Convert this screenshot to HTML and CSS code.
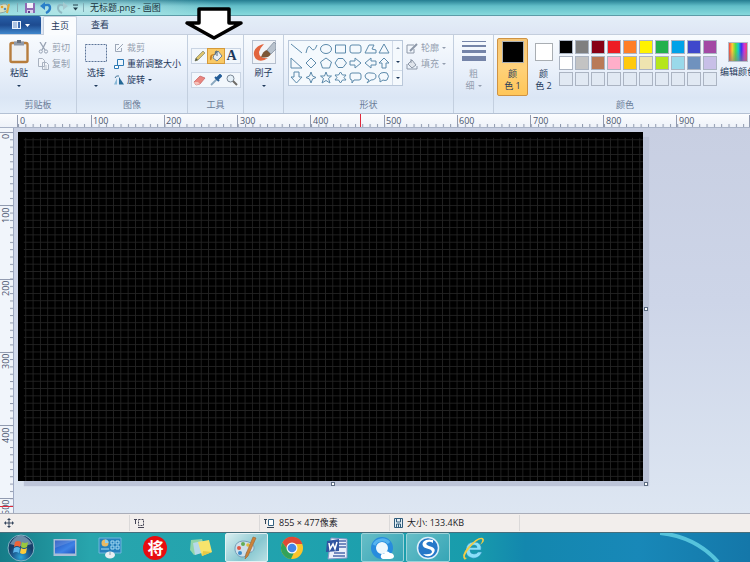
FILE: index.html
```html
<!DOCTYPE html>
<html lang="zh-CN">
<head>
<meta charset="utf-8">
<title>无标题.png - 画图</title>
<link rel="stylesheet" href="styles.css">
</head>
<body>
<header class="titlebar">
  <svg class="app-icon" width="11" height="14" viewBox="0 0 11 14"><path d="M0 4Q7 1 8 6T0 12" fill="#d9dfc2" stroke="#8fa6a0"/><circle cx="2" cy="6" r="1.3" fill="#e0a32c"/><circle cx="5" cy="8" r="1.3" fill="#4a91c4"/><path d="M7 12L9 3" stroke="#e2a93a" stroke-width="2"/></svg>
  <span class="divider"></span>
  <button class="quick" aria-label="保存"><svg width="12" height="12" viewBox="0 0 12 12"><path d="M1 1h10v10H1z" fill="#8d6bb3"/><path d="M3 1h6v5H3z" fill="#f4f2fa"/><path d="M3 8h6v3H3z" fill="#d8d0ea"/><path d="M4 9h2v2H4z" fill="#5d3f8b"/></svg></button>
  <button class="quick" aria-label="撤销"><svg width="12" height="12" viewBox="0 0 12 12"><path d="M3 4Q10 1 10 6Q10 9 6 11" fill="none" stroke="#2a7fc9" stroke-width="2.4"/><path d="M0 4L5 0V8z" fill="#2a7fc9"/></svg></button>
  <button class="quick" aria-label="重做"><svg width="12" height="12" viewBox="0 0 12 12"><path d="M9 4Q2 1 2 6Q2 9 6 11" fill="none" stroke="#8fb9c2" stroke-width="2"/><path d="M12 4L7 0V8z" fill="#a5c9cf"/></svg></button>
  <button class="quick" aria-label="自定义"><svg width="7" height="8" viewBox="0 0 7 8"><path d="M1 1h5" stroke="#223f4a"/><path d="M1 3.5h5L3.5 6.5z" fill="#223f4a"/></svg></button>
  <span class="divider"></span>
  <h1>无标题.png - 画图</h1>
</header>

<nav class="tabs">
  <button class="file" aria-label="文件"><svg width="20" height="10" viewBox="0 0 20 10"><path d="M1 1h9v8H1z" fill="#e9f1fb"/><path d="M2 3h4M2 5h4M2 7h4" stroke="#7195c8"/><path d="M7 2h2v6H7z" fill="#3c6bb0"/><path d="M14 4h5l-2.500 3z" fill="#fff"/></svg></button>
  <button class="tab active">主页</button>
  <button class="tab">查看</button>
  <svg class="pointer" width="62" height="36" viewBox="0 0 62 36"><path d="M16 3H46V17H58L31 32L4 17H16z" fill="#fff" stroke="#000" stroke-width="3.500" stroke-linejoin="round"/></svg>
</nav>

<main class="ribbon">
  <section class="group clipboard">
    <div class="tools">
      <button class="big"><svg width="20" height="24" viewBox="0 0 20 24"><rect x="1.500" y="3" width="17" height="19" rx="1.500" fill="#edf0f3" stroke="#b77d3c" stroke-width="2.400"/><path d="M5 1.500h10v4H5z" fill="#8e99a8"/><path d="M8 0h4v3H8z" fill="#66717f"/></svg><span>粘贴</span><i class="caret"></i></button>
      <div class="stack">
        <button class="small off"><svg width="11" height="12" viewBox="0 0 11 12"><path d="M2 0L7 8M8 0L4 8" stroke="#98a3b4" stroke-width="1.300"/><circle cx="2.800" cy="9.500" r="1.600" fill="none" stroke="#98a3b4"/><circle cx="8" cy="9.500" r="1.600" fill="none" stroke="#98a3b4"/></svg>剪切</button>
        <button class="small off"><svg width="11" height="12" viewBox="0 0 11 12"><path d="M.5.5h4l2 2v6h-6zM4.500 4.500h4l2 2v5h-6z" fill="#f2f5fa" stroke="#a9b2c0"/><path d="M6 8h3M6 10h3" stroke="#b9c1cc"/></svg>复制</button>
      </div>
    </div>
    <h2>剪贴板</h2>
  </section>

  <section class="group image">
    <div class="tools">
      <button class="big"><svg width="24" height="24" viewBox="0 0 24 24"><rect x="1.500" y="4.500" width="21" height="17" fill="#e8effa" stroke="#5d7598" stroke-dasharray="2 1"/></svg><span>选择</span><i class="caret"></i></button>
      <div class="stack">
        <button class="small off"><svg width="10" height="10" viewBox="0 0 10 10"><path d="M1.500 2v6.500h6V5M1 1.500h4M3 7L9 1" fill="none" stroke="#9ca7b7"/></svg>裁剪</button>
        <button class="small"><svg width="10" height="10" viewBox="0 0 10 10"><path d="M3.500.5h6v6h-6z" fill="#eef6fd" stroke="#2d7ab5"/><path d="M.5 6.500h4v3h-4z" fill="#fff" stroke="#2d7ab5"/></svg>重新调整大小</button>
        <button class="small"><svg width="10" height="10" viewBox="0 0 10 10"><path d="M0 9.500L3 3v6.500z" fill="#88b8d7"/><path d="M5 2v7.500h5z" fill="#246896"/><path d="M1 3Q2 0 5 1" fill="none" stroke="#45779a"/></svg>旋转<i class="caret"></i></button>
      </div>
    </div>
    <h2>图像</h2>
  </section>

  <section class="group toolset">
    <div class="tool-rows">
      <div class="tool-row">
        <button aria-label="铅笔"><svg width="12" height="12" viewBox="0 0 12 12"><path d="M1 11L2 8L9 1L11 3L4 10z" fill="#ddc36b" stroke="#8f9273" stroke-width=".8"/><path d="M1 11L2 8L4 10z" fill="#4e5848"/></svg></button>
        <button class="selected" aria-label="用颜色填充"><svg width="14" height="13" viewBox="0 0 14 13"><path d="M5 5L9 1L13 6L8 11L4 8z" fill="#e9eef3" stroke="#6e8396"/><path d="M6 5Q6 0 8 1V6" fill="none" stroke="#53697c"/><path d="M1 10Q0 3 6 4L3 6Q3 11 1 10" fill="#c98021"/></svg></button>
        <button class="letter">A</button>
      </div>
      <div class="tool-row">
        <button aria-label="橡皮擦"><svg width="13" height="11" viewBox="0 0 13 11"><path d="M1 7L7 1L12 3L7 9L3 10z" fill="#e9867f" stroke="#c65f5e" stroke-width=".7"/><path d="M1 7L5 7L7 9L3 10z" fill="#f7c1b9"/></svg></button>
        <button aria-label="颜色选取器"><svg width="12" height="12" viewBox="0 0 12 12"><path d="M1 11L7 5" stroke="#8aa8bf" stroke-width="1.800"/><path d="M5 3L9 7M7 4L10 1L11 2L8 5" stroke="#245d97" stroke-width="2" fill="#245d97"/></svg></button>
        <button aria-label="放大镜"><svg width="12" height="12" viewBox="0 0 12 12"><circle cx="4.500" cy="4.500" r="3.500" fill="#e5f0f8" stroke="#7a8795"/><path d="M7 7L11 11" stroke="#6e6b66" stroke-width="2"/></svg></button>
      </div>
    </div>
    <h2>工具</h2>
  </section>

  <section class="group brushes">
    <div class="tools">
      <button class="big"><svg width="24" height="24" viewBox="0 0 24 24"><rect x=".5" y=".5" width="23" height="23" fill="#f1f4f8" stroke="#b5bfce"/><path d="M12 4C3 6 -1 13 4 19Q9 23 16 18Q7 19 7 12Q8 8 12 4" fill="#e2653e"/><path d="M9 17Q11 11 15 10L19 14Q16 19 9 17" fill="#7c5636"/><path d="M15 10L22 2L24 4V9L19 14z" fill="#b8c2cd" stroke="#6c7b8c" stroke-width=".6"/></svg><span>刷子</span><i class="caret"></i></button>
    </div>
  </section>

  <section class="group shapes">
    <div class="tools">
      <div class="gallery">
        <svg class="shape-list" width="103" height="44" viewBox="0 0 103 44" fill="#f4f9fd" stroke="#5c8aab">
          <path d="M2 3L13 12"/><path d="M17 12Q19 2 22 7T28 4" fill="none"/><ellipse cx="37" cy="8" rx="5.500" ry="4.500"/><path d="M46.500 4h10v8h-10z"/><rect x="61" y="4" width="11" height="8" rx="2"/><path d="M76 12L80 4H85L83 8L87 9V12z"/><path d="M95 3L100 12H90z"/>
          <path d="M2 17V27H13z"/><path d="M22 17L27 22L22 27L17 22z"/><path d="M37 17L42.500 21L40.500 27H33.500L31.500 21z"/><path d="M49 17.500H54L57.500 22L54 26.500H49L46 22z"/><path d="M61 20H66V17L72 22L66 27V24H61z"/><path d="M87 20H82V17L76 22L82 27V24H87z"/><path d="M95 17L100 22H97V27H93V22H90z"/>
          <path d="M5 31H10V36H13L7.500 42L2 36H5z"/><path d="M22 31L23.500 35L27 36.500L23.500 38L22 42L20.500 38L17 36.500L20.500 35z"/><path d="M37 31L38.500 35H42.500L39.500 37.500L41 42L37 39.500L33 42L34.500 37.500L31.500 35H35.500z"/><path d="M51.500 31L53.500 34H57L55 36.500L57 39H53.500L51.500 42L49.500 39H46L48 36.500L46 34H49.500z"/><path d="M63 32H70Q72 32 72 34V37Q72 39 70 39H65L63 42V39Q61 39 61 37V34Q61 32 63 32z"/><path d="M80 39Q76 38 76 35Q77 31 82 32Q87 32 87 35Q87 39 82 39L78 42z"/><path d="M92 32Q95 31 98 32Q101 35 98 39Q96 40 94 39L91 41V38Q88 35 92 32z"/>
        </svg>
        <div class="scroller"><button aria-label="向上"><i class="caret up"></i></button><button aria-label="向下"><i class="caret"></i></button><button class="more" aria-label="更多"><i class="caret"></i></button></div>
      </div>
      <div class="stack">
        <button class="small off"><svg width="12" height="11" viewBox="0 0 12 11"><path d="M8 2H1v8h7V6" fill="none" stroke="#8d98a8"/><path d="M4 8L11 1" stroke="#8d98a8" stroke-width="2"/></svg>轮廓<i class="caret"></i></button>
        <button class="small off"><svg width="12" height="11" viewBox="0 0 12 11"><path d="M2 5L6 1L10 6L6 9z" fill="#e0e5ec" stroke="#8d98a8"/><path d="M1 5V10H11V7M5 4V0" fill="none" stroke="#8d98a8"/></svg>填充<i class="caret"></i></button>
      </div>
    </div>
    <h2>形状</h2>
  </section>

  <section class="group size">
    <button class="weight off"><svg width="24" height="22" viewBox="0 0 24 22" fill="#7584a8"><path d="M0 1h24v1H0zM0 5h24v2H0zM0 10h24v3H0zM0 16h24v5H0z"/></svg><span>粗</span><span class="row">细<i class="caret"></i></span></button>
  </section>

  <section class="group colors">
    <div class="color-tools">
      <button class="pick selected"><span class="sample black"></span><span>颜</span><span>色 1</span></button>
      <button class="pick"><span class="sample small-sample white"></span><span>颜</span><span>色 2</span></button>
      <div class="palette">
        <button class="c1" aria-label="黑色"></button><button class="c2" aria-label="灰色"></button><button class="c3" aria-label="深红色"></button><button class="c4" aria-label="红色"></button><button class="c5" aria-label="橙色"></button><button class="c6" aria-label="黄色"></button><button class="c7" aria-label="绿色"></button><button class="c8" aria-label="青绿"></button><button class="c9" aria-label="靛青"></button><button class="c10" aria-label="紫色"></button>
        <button class="c11" aria-label="白色"></button><button class="c12" aria-label="浅灰色"></button><button class="c13" aria-label="褐色"></button><button class="c14" aria-label="玫瑰色"></button><button class="c15" aria-label="金色"></button><button class="c16" aria-label="浅黄色"></button><button class="c17" aria-label="酸橙色"></button><button class="c18" aria-label="淡青绿色"></button><button class="c19" aria-label="蓝灰色"></button><button class="c20" aria-label="淡紫色"></button>
        <button aria-label="自定义 1"></button><button aria-label="自定义 2"></button><button aria-label="自定义 3"></button><button aria-label="自定义 4"></button><button aria-label="自定义 5"></button><button aria-label="自定义 6"></button><button aria-label="自定义 7"></button><button aria-label="自定义 8"></button><button aria-label="自定义 9"></button><button aria-label="自定义 10"></button>
      </div>
      <button class="edit"><span class="spectrum"></span><span>编辑颜色</span></button>
    </div>
    <h2>颜色</h2>
  </section>
</main>

<svg class="ruler-x" width="100%" height="14">
  <defs><pattern id="tx" x="18" width="7.325" height="14" patternUnits="userSpaceOnUse"><path d="M.5 10V14" stroke="#8e98ad"/></pattern></defs>
  <rect x="18" width="100%" height="14" fill="url(#tx)"/>
  <path d="M17.500 1V14M91.500 1V14M164.500 1V14M237.500 1V14M310.500 1V14M384.500 1V14M457.500 1V14M530.500 1V14M603.500 1V14M676.500 1V14M749.500 1V14" stroke="#929bb0"/>
  <path d="M360.500 0V14" stroke="#e0283c"/>
  <text x="20" y="10">0</text><text x="93" y="10">100</text><text x="166" y="10">200</text><text x="240" y="10">300</text><text x="313" y="10">400</text><text x="386" y="10">500</text><text x="459" y="10">600</text><text x="533" y="10">700</text><text x="606" y="10">800</text><text x="679" y="10">900</text>
</svg>

<div class="workspace">
  <svg class="ruler-y" width="14" height="100%">
    <defs><pattern id="ty" y="4" width="14" height="7.325" patternUnits="userSpaceOnUse"><path d="M10 .5H14" stroke="#8e98ad"/></pattern></defs>
    <rect y="4" width="14" height="100%" fill="url(#ty)"/>
    <path d="M0 4.500H14M0 77.500H14M0 151.500H14M0 224.500H14M0 297.500H14M0 370.500H14" stroke="#929bb0"/>
    <g transform="rotate(-90)"><text x="-11" y="9">0</text><text x="-95" y="9">100</text><text x="-168" y="9">200</text><text x="-241" y="9">300</text><text x="-315" y="9">400</text><text x="-387" y="9">500</text></g>
    <path d="M0 378.500H14" stroke="#e0283c"/>
  </svg>
  <div class="desk">
    <div class="canvas">
      <svg width="100%" height="100%" viewBox="0 0 855 477" preserveAspectRatio="none">
        <defs><pattern id="grid" width="10" height="10" patternUnits="userSpaceOnUse"><path d="M0 .6H10M.6 0V10" stroke="#252525" stroke-width="1.200"/></pattern></defs>
        <rect width="855" height="477" fill="#000"/><rect x="8" y="8" width="847" height="469" fill="url(#grid)"/>
      </svg>
      <span class="handle right"></span><span class="handle bottom"></span><span class="handle corner"></span>
    </div>
  </div>
</div>

<footer class="status">
  <div><svg width="10" height="10" viewBox="0 0 10 10"><path d="M5 1V9M1 5H9" stroke="#34455c"/><path d="M5 0L7 2H3zM5 10L3 8H7zM0 5L2 3V7zM10 5L8 3V7z" fill="#34455c"/></svg></div>
  <div><svg width="11" height="10" viewBox="0 0 11 10"><path d="M1.500 1V6M0 1.500H3" stroke="#445"/><path d="M4.500 1.500h5v6h-5z" fill="none" stroke="#445" stroke-dasharray="2 1"/><path d="M4 9.500h6" stroke="#445"/></svg></div>
  <div><svg width="11" height="10" viewBox="0 0 11 10"><path d="M1.500 1V6M0 1.500H3" stroke="#345"/><path d="M4.500 1.500h5v6h-5z" fill="#fff" stroke="#356382"/><path d="M3 9.500h7" stroke="#345"/></svg>855 × 477像素</div>
  <div><svg width="9" height="10" viewBox="0 0 9 10"><path d="M.5.5h8v9h-8z" fill="#e5eff5" stroke="#315d7c"/><path d="M2.500 1v3h4V1M2.500 9V6h4v3M4.500 6v3" fill="none" stroke="#315d7c"/></svg>大小: 133.4KB</div>
</footer>

<nav class="taskbar">
  <svg class="sweep" viewBox="0 0 80 30" preserveAspectRatio="none"><path d="M0 0Q36 4 58 30" fill="none" stroke="#55c3dc" stroke-width="4"/></svg>
  <button class="start" aria-label="开始"><svg width="28" height="28" viewBox="0 0 28 28"><defs><radialGradient id="orb" cy=".85"><stop stop-color="#2ba6d8"/><stop offset=".6" stop-color="#1d5f96"/><stop offset="1" stop-color="#173e69"/></radialGradient></defs><circle cx="14" cy="14" r="13" fill="url(#orb)" stroke="#7fb3c4"/><path d="M3 10Q8 1 14 1.500T25 10Q14 14 3 10" fill="#bfd9e6" opacity=".5"/><path d="M8 8Q11 6 14 8L13 13Q10 11 7 13z" fill="#ee6338"/><path d="M15 8Q18 10 21 8L20 13Q17 15 14 13z" fill="#9ac93c"/><path d="M7 14Q10 12 13 14L12 19Q9 17 6 19z" fill="#5ab4ea"/><path d="M14 14Q17 16 20 14L19 19Q16 21 13 19z" fill="#fdcb3b"/></svg></button>
  <div class="apps">
    <button aria-label="显示桌面"><svg width="24" height="20" viewBox="0 0 24 20"><defs><linearGradient id="scr" x2="1" y2="1"><stop stop-color="#1d4ebc"/><stop offset=".6" stop-color="#3f83e6"/><stop offset="1" stop-color="#1f56c2"/></linearGradient></defs><path d="M.5 1h23v17H.5z" fill="#a9bed6"/><path d="M2 2.500h20v13H2z" fill="url(#scr)"/><path d="M2 2.500h20L2 10z" fill="#fff" opacity=".15"/></svg></button>
    <button aria-label="控制面板"><svg width="24" height="22" viewBox="0 0 24 22"><path d="M1 1h22v15H1z" fill="#2580bd" stroke="#71b7dd"/><circle cx="7" cy="6" r="3.500" fill="#e8ba65"/><path d="M7 6V2.500A3.500 3.500 0 0 1 10.500 6z" fill="#8ed0f1"/><path d="M13 4h3v3h-3zM18 4h3v3h-3zM13 9h3v3h-3zM18 9h3v3h-3zM3 12h8" fill="none" stroke="#a8dcf4"/><ellipse cx="12" cy="18" rx="5" ry="3.500" fill="#e8eff3"/><path d="M12 15v3" stroke="#8ba3b2"/></svg></button>
    <button><span class="chess">将</span></button>
    <button aria-label="便笺"><svg width="24" height="20" viewBox="0 0 24 20"><path d="M2 2L13 1L17 13L5 17L1 12z" fill="#91d5a9"/><path d="M4 5L13 3L16 14L6 17z" fill="#b7d9ea"/><path d="M9 4L20 2L23 14L13 18z" fill="#f7e46c"/><path d="M13 18L14 13L23 14z" fill="#e7c945"/></svg></button>
    <button class="open active" aria-label="画图"><svg width="26" height="26" viewBox="0 0 26 26"><path d="M2 15C1 6 10 4 18 8C24 12 20 19 15 17Q13 16 13 20C11 24 3 22 2 15" fill="#cfdfea" stroke="#739fb8"/><circle cx="6" cy="13" r="2" fill="#df5744"/><circle cx="10" cy="9" r="2" fill="#62ad55"/><circle cx="15" cy="10" r="1.800" fill="#e5bb3e"/><circle cx="7" cy="18" r="2" fill="#3a8bc9"/><path d="M23 3L15 21L12 24L13 19L20 2z" fill="#cc8338" stroke="#996333" stroke-width=".6"/></svg></button>
    <button aria-label="Chrome"><svg width="24" height="24" viewBox="0 0 24 24"><circle cx="12" cy="12" r="11" fill="#fbc52a"/><path d="M2.500 6.500A11 11 0 0 1 22.500 8H12A4.500 4.500 0 0 0 8 14z" fill="#df4937"/><path d="M2.500 6.500L8 14Q10 17 14 16.500L11 23A11 11 0 0 1 2.500 6.500" fill="#32a259"/><circle cx="12" cy="12" r="5.500" fill="#f4f7fa"/><circle cx="12" cy="12" r="4.300" fill="#4385e8"/></svg></button>
    <button aria-label="Word"><svg width="24" height="24" viewBox="0 0 24 24"><path d="M6 2L22 3V22L3 23z" fill="#eaf0fa" stroke="#8597c8"/><path d="M14 5h7M14 8h7M14 11h7M9 17h11M8 20h12" stroke="#4c69ad" stroke-width="1.500"/><path d="M2 5L14 3V15L1 16z" fill="#3155a1"/><path d="M4 7L5 13L8 8L10 13L12 6" fill="none" stroke="#fff" stroke-width="1.500"/></svg></button>
    <button class="open" aria-label="浏览器"><svg width="26" height="24" viewBox="0 0 26 24"><circle cx="13" cy="12" r="8.500" fill="#eef8fd" stroke="#278cdd" stroke-width="5"/><path d="M5 9A9 9 0 0 1 20 7" fill="none" stroke="#55b4ef" stroke-width="3"/><path d="M14 23Q11 22 12 19Q13 17 15 18Q17 13 21 17Q25 17 25 21Q24 23 21 23z" fill="#fff"/></svg></button>
    <button class="open" aria-label="搜狗浏览器"><svg width="24" height="24" viewBox="0 0 24 24"><circle cx="12" cy="12" r="10.500" fill="#2678c9" stroke="#dceffa" stroke-width="1.500"/><path d="M17 4C10 2 5 6 7 10C8 13 16 12 16 16Q15 19 7 18Q11 22 16 19C22 13 17 11 13 10Q8 8 12 6Q14 5 17 7z" fill="#fff"/></svg></button>
    <button aria-label="Internet Explorer"><svg width="26" height="26" viewBox="0 0 26 26"><path d="M21 15H10Q10 19 14 19Q17 19 18 17H22Q19 24 12 23Q5 21 6 14Q7 7 14 7Q22 7 21 15M10 12.500H17Q17 10 14 10T10 12.500" fill="#8be0f8" stroke="#2589ba" stroke-width=".5"/><path d="M5 25Q0 21 8 12Q18 1 23 3Q26 6 20 10Q24 4 21 4Q16 5 9 14Q2 23 7 23Q5 24 5 25" fill="#f2cb45"/></svg></button>
  </div>
</nav>
</body>
</html>
```
FILE: styles.css
```css
* { box-sizing: border-box; }
body {
  margin: 0;
  min-height: 100vh;
  display: flex;
  flex-direction: column;
  overflow: hidden;
  font: 9px/12px "Open Sans", "Noto Sans CJK SC", sans-serif;
  color: #1e395b;
  background: #dce6f4;
}
button {
  font: inherit;
  color: inherit;
  background: none;
  border: 0;
  padding: 0;
  display: flex;
  align-items: center;
  justify-content: center;
}
svg { display: block; flex: none; }
h1, h2 { margin: 0; font: inherit; }

.titlebar {
  height: 16px;
  display: flex;
  align-items: center;
  gap: 4px;
  color: #17323c;
  border-bottom: 1px solid #5d9ca8;
  background:
    radial-gradient(ellipse 150px 16px at 80px 9px, rgba(220, 245, 245, .7), transparent),
    linear-gradient(#247c90, #62bec8 40%, #86d9dc);
}
.titlebar h1 { margin-left: 2px; }
.divider { width: 1px; height: 9px; background: #7fabb5; }
.divider:first-of-type { margin-left: 2px; margin-right: 2px; }

.tabs {
  position: relative;
  height: 19px;
  display: flex;
  background: linear-gradient(#e4eef8, #dee6f4);
  border-bottom: 1px solid #c4cedd;
}
.file { width: 41px; height: 18px; background: linear-gradient(#285fa8, #1d4b90 50%, #3f86cc); border-radius: 0 2px 0 0; }
.tab { width: 34px; margin-left: 2px; }
.tab + .tab { width: 42px; }
.tab.active { height: 19px; background: #fafcfe; border: 1px solid #c6d0df; border-bottom: 0; border-radius: 2px 2px 0 0; }
.pointer { position: absolute; left: 183px; top: -10px; z-index: 2; }

.ribbon {
  height: 79px;
  display: flex;
  overflow: hidden;
  background: linear-gradient(#f8fbfe, #e9f0fa 45%, #dbe6f5 80%, #e3edf9);
  border-bottom: 1px solid #b4c1d4;
}
.group {
  flex: none;
  display: flex;
  flex-direction: column;
  justify-content: space-between;
  padding: 5px 0 2px;
  border-right: 1px solid #c3cfdf;
}
.group h2 { text-align: center; color: #6b7d98; }
.clipboard { width: 77px; }
.image { width: 111px; }
.toolset { width: 56px; }
.brushes { width: 40px; }
.shapes { width: 170px; }
.size { width: 40px; }
.colors { flex: 1 0 257px; border-right: 0; }
.tools { display: flex; align-items: flex-start; padding-left: 4px; gap: 4px; }
.big { width: 30px; flex-direction: column; gap: 3px; }
.stack { display: flex; flex-direction: column; }
.small { height: 16px; gap: 3px; justify-content: flex-start; white-space: nowrap; }
.image .tools { gap: 3px; }
.off { color: #939eaf; }
.caret {
  display: inline-block;
  width: 0;
  border: 2px solid transparent;
  border-top-color: currentColor;
  border-bottom: 0;
}
.big .caret { margin-top: 3px; }
.caret.up { transform: rotate(180deg); opacity: .5; }

.tool-rows { display: flex; flex-direction: column; gap: 8px; margin: 8px auto 0; }
.tool-row { display: flex; border: 1px solid #c9d4e3; background: #f2f7fc; }
.tool-row button { width: 16px; height: 14px; }
.tool-row .selected { background: #f9c965; outline: 1px solid #d49a3c; }
.tool-row .letter { font: bold 14px/14px "Liberation Serif", serif; }
.brushes .tools { justify-content: center; padding: 0; }

.gallery { display: flex; border: 1px solid #bac8da; background: #f4f9fd; }
.shape-list { height: 44px; }
.scroller { width: 10px; display: flex; flex-direction: column; border-left: 1px solid #d1dbe8; }
.scroller button { flex: 1; }
.scroller .more { border-top: 1px solid #d1dbe8; }
.more .caret { box-shadow: 0 -3px 0 -1px currentColor; }
.shapes .stack { margin-left: -1px; }
.weight { flex-direction: column; }
.weight svg { margin-bottom: 6px; }
.row { display: flex; align-items: center; gap: 3px; }

.color-tools { display: flex; align-items: flex-start; margin-top: -2px; padding-left: 3px; white-space: nowrap; }
.pick { width: 31px; height: 58px; flex: none; flex-direction: column; justify-content: flex-start; padding-top: 2px; border: 1px solid transparent; border-radius: 2px; }
.pick.selected { background: linear-gradient(#f5c676, #ffd27a 50%, #ffc659); border-color: #cf9343; }
.sample { width: 22px; height: 22px; margin-bottom: 5px; border: 1px solid #a9aeb3; }
.small-sample { width: 18px; height: 18px; margin: 2px 0 7px; }
.black { background: #000; }
.white { background: #fff; }
.palette { flex: none; display: grid; grid-template-columns: repeat(10, 14px); gap: 2px; margin: 2px 0 0; }
.palette button { height: 14px; border: 1px solid #abb4c2; background: #e1e9f3; }
.palette .c1 { background: #000; }
.palette .c2 { background: #7f7f7f; }
.palette .c3 { background: #880015; }
.palette .c4 { background: #ed1c24; }
.palette .c5 { background: #ff7f27; }
.palette .c6 { background: #fff200; }
.palette .c7 { background: #22b14c; }
.palette .c8 { background: #00a2e8; }
.palette .c9 { background: #3f48cc; }
.palette .c10 { background: #a349a4; }
.palette .c11 { background: #fff; }
.palette .c12 { background: #c3c3c3; }
.palette .c13 { background: #b97a57; }
.palette .c14 { background: #ffaec9; }
.palette .c15 { background: #ffc90e; }
.palette .c16 { background: #efe4b0; }
.palette .c17 { background: #b5e61d; }
.palette .c18 { background: #99d9ea; }
.palette .c19 { background: #7092be; }
.palette .c20 { background: #c8bfe7; }
.edit { flex: none; flex-direction: column; gap: 4px; padding: 4px 0 0 3px; }
.spectrum {
  width: 20px;
  height: 20px;
  border: 1px solid #b3bcc9;
  background: linear-gradient(transparent 40%, rgba(128, 128, 128, .6)), linear-gradient(90deg, #e44, #fc3 18%, #5d4 36%, #1cc 52%, #33e 68%, #c3d 84%, #e46);
}

.ruler-x { background: linear-gradient(#fbfcfe, #eef2f9); border-bottom: 1px solid #a8b2c6; }
.ruler-x text, .ruler-y text { fill: #4c566e; }
.workspace { flex: 1; min-height: 385px; display: flex; background: linear-gradient(#c8cfe2, #cdd5e8 45%, #dde6f2); }
.ruler-y { height: auto; background: #f1f5fb; border-right: 1px solid #9faac3; }
.desk { flex: 1; padding: 4px; }
.canvas { position: relative; width: 625px; height: 349px; box-shadow: 6px 5px 1px #bcc4d8; }
.handle { position: absolute; width: 4px; height: 4px; border: 1px solid #5d6c82; background: #fff; }
.handle.right { left: 100%; top: 50%; margin-left: 1px; }
.handle.bottom { left: 50%; top: 100%; margin-top: 1px; }
.handle.corner { left: 100%; top: 100%; margin: 1px; }

.status {
  height: 19px;
  display: flex;
  color: #1c1c28;
  background: #f2eeec;
  border-top: 1px solid #a9adb9;
}
.status div { width: 130px; display: flex; align-items: center; gap: 4px; padding-left: 4px; margin: 1px 0; border-right: 1px solid #dbd9d9; white-space: nowrap; }

.taskbar {
  position: relative;
  height: 30px;
  display: flex;
  border-top: 1px solid #476e7c;
  background: linear-gradient(90deg, #167c88, #28a5ad 12%, #20a2ae 40%, #189cac 63%, #1387ae 70%, #1888b8 85%, #1477a9);
}
.sweep { position: absolute; left: 660px; top: 0; width: 80px; height: 29px; }
.start { width: 42px; }
.apps { width: 454px; display: grid; grid-template-columns: repeat(10, 1fr); }
.apps button { margin: 0 1px; border: 1px solid transparent; }
.apps .open { background: linear-gradient(135deg, #67bec7, #36a5b6); border-color: #9ad3d9; border-radius: 2px; }
.apps .active { background: linear-gradient(135deg, #d9eef0, #87c7d0 60%, #b9e0e4); border-color: #e1f1f3; }
.chess { width: 24px; height: 24px; border-radius: 50%; background: #e80d10; color: #fff; font: bold 16px/22px "Noto Sans CJK SC", sans-serif; }
```
